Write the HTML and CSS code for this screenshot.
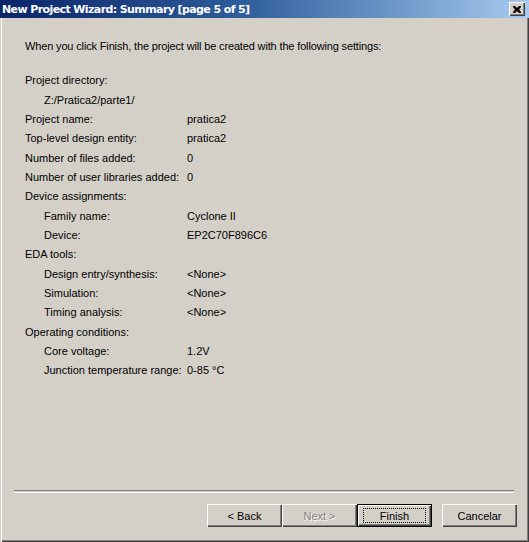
FILE: index.html
```html
<!DOCTYPE html>
<html>
<head>
<meta charset="utf-8">
<link rel="stylesheet" href="styles.css">
</head>
<body>
<div class="window">
  <div class="titlebar">
    <span class="title">New Project Wizard: Summary [page 5 of 5]</span>
    <span class="close"><svg width="8" height="7" viewBox="0 0 8 7"><path d="M0 0h2l2 2 2-2h2v1l-2 2.5 2 2.5v1h-2l-2-2-2 2h-2v-1l2-2.5-2-2.5z" fill="#000"/></svg></span>
  </div>
  <div class="content">
    <p class="intro">When you click Finish, the project will be created with the following settings:</p>
    <div class="summary">
      <div class="row"><span class="label">Project directory:</span></div>
      <div class="row"><span class="label sub wide">Z:/Pratica2/parte1/</span></div>
      <div class="row"><span class="label">Project name:</span><span class="value">pratica2</span></div>
      <div class="row"><span class="label">Top-level design entity:</span><span class="value">pratica2</span></div>
      <div class="row"><span class="label">Number of files added:</span><span class="value">0</span></div>
      <div class="row"><span class="label">Number of user libraries added:</span><span class="value">0</span></div>
      <div class="row"><span class="label">Device assignments:</span></div>
      <div class="row"><span class="label sub">Family name:</span><span class="value">Cyclone II</span></div>
      <div class="row"><span class="label sub">Device:</span><span class="value">EP2C70F896C6</span></div>
      <div class="row"><span class="label">EDA tools:</span></div>
      <div class="row"><span class="label sub">Design entry/synthesis:</span><span class="value">&lt;None&gt;</span></div>
      <div class="row"><span class="label sub">Simulation:</span><span class="value">&lt;None&gt;</span></div>
      <div class="row"><span class="label sub">Timing analysis:</span><span class="value">&lt;None&gt;</span></div>
      <div class="row"><span class="label">Operating conditions:</span></div>
      <div class="row"><span class="label sub">Core voltage:</span><span class="value">1.2V</span></div>
      <div class="row"><span class="label sub">Junction temperature range:</span><span class="value">0-85 °C</span></div>
    </div>
  </div>
  <div class="footer">
    <div class="separator"></div>
    <div class="buttons">
      <span class="btn">&lt; Back</span>
      <span class="btn disabled">Next &gt;</span>
      <span class="btn default"><span class="focus">Finish</span></span>
      <span class="btn cancel">Cancelar</span>
    </div>
  </div>
</div>
</body>
</html>
```

FILE: styles.css
```css
html, body {
  margin: 0;
  padding: 0;
  background: #d4d0c8;
}
.window {
  width: 529px;
  height: 542px;
  box-sizing: border-box;
  display: flex;
  flex-direction: column;
  background: #d4d0c8;
  box-shadow: inset 1px 0 0 #d4d0c8, inset 2px 0 0 #ffffff, inset -1px -1px 0 #404040, inset -2px -2px 0 #808080;
  font-family: "Liberation Sans", Arial, sans-serif;
  font-size: 11px;
  color: #000;
  overflow: hidden;
}
.titlebar {
  height: 18px;
  flex: none;
  display: flex;
  align-items: center;
  justify-content: space-between;
  background: linear-gradient(to right, #0a246a 0%, #2d5c9a 45%, #a6caf0 100%);
  padding: 0 4px 0 2px;
}
.title {
  color: #fff;
  font-weight: bold;
  font-size: 11px;
  font-family: "DejaVu Sans", Verdana, sans-serif;
  letter-spacing: -0.6px;
  white-space: nowrap;
}
.close {
  width: 16px;
  height: 14px;
  box-sizing: border-box;
  display: flex;
  align-items: center;
  justify-content: center;
  background: #d4d0c8;
  box-shadow: inset 1px 1px 0 #ffffff, inset -1px -1px 0 #404040, inset -2px -2px 0 #808080;
}
.content {
  flex: 1;
  padding: 19px 0 0 25px;
}
.intro {
  margin: 0 0 15px 0;
  line-height: 19.33px;
  white-space: nowrap;
  letter-spacing: -0.15px;
}
.summary {
  display: flex;
  flex-direction: column;
}
.row {
  display: flex;
  height: 19.33px;
  line-height: 19.33px;
  white-space: nowrap;
}
.label {
  width: 162px;
  flex: none;
}
.label.sub {
  padding-left: 19px;
  width: 143px;
}
.label.wide {
  width: auto;
}
.footer {
  flex: none;
  display: flex;
  flex-direction: column;
  padding-bottom: 15px;
}
.separator {
  margin: 0 15px 0 14px;
  height: 1px;
  border-top: 1px solid #808080;
  border-bottom: 1px solid #ffffff;
}
.buttons {
  margin-top: 11px;
  display: flex;
  justify-content: flex-end;
  padding-right: 12px;
}
.btn {
  width: 75px;
  height: 23px;
  box-sizing: border-box;
  display: flex;
  align-items: center;
  justify-content: center;
  background: #d4d0c8;
  box-shadow: inset 1px 1px 0 #ffffff, inset -1px -1px 0 #404040, inset -2px -2px 0 #808080;
}
.btn.disabled {
  color: #808080;
  text-shadow: 1px 1px 0 #ffffff;
}
.btn.default {
  box-shadow: inset 0 0 0 1px #000, inset 2px 2px 0 #ffffff, inset -2px -2px 0 #404040, inset -3px -3px 0 #808080;
}
.focus {
  width: 63px;
  height: 15px;
  box-sizing: border-box;
  border: 1px dotted #000;
  display: flex;
  align-items: center;
  justify-content: center;
}
.btn.cancel {
  margin-left: 10px;
}
```
